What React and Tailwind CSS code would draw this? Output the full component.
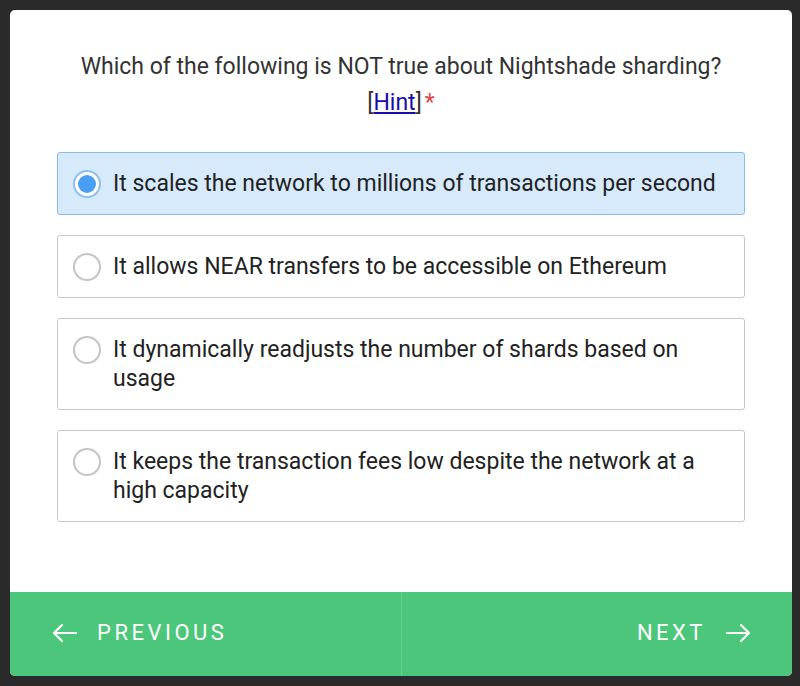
import React from "react";

const options = [
  "It scales the network to millions of transactions per second",
  "It allows NEAR transfers to be accessible on Ethereum",
  "It dynamically readjusts the number of shards based on usage",
  "It keeps the transaction fees low despite the network at a high capacity",
];

function Radio({ checked }) {
  if (checked) {
    return (
      <div className="w-[28px] h-[28px] rounded-full border-2 border-[#8ec0ee] bg-white flex items-center justify-center shrink-0">
        <div className="w-[18px] h-[18px] rounded-full bg-[#4a9ff5]" />
      </div>
    );
  }
  return <div className="w-[28px] h-[28px] rounded-full border-2 border-[#c4c4c4] bg-white shrink-0" />;
}

export default function App() {
  return (
    <div className="w-[800px] h-[686px] bg-[#2a2a2a] p-[10px] pr-[8px] pb-[10px]" style={{ fontFamily: "Roboto, 'Liberation Sans', sans-serif" }}>
      <div className="w-[782px] h-[666px] bg-white rounded-[5px] overflow-hidden flex flex-col">
        <div className="flex-1 flex flex-col items-center pt-[39px]">
          <div className="text-[23px] leading-[36px] text-[#333] text-center">
            Which of the following is NOT true about Nightshade sharding?
          </div>
          <div className="text-[23px] leading-[36px] text-[#333] text-center">
            [<span className="text-[#1a0dab] underline">Hint</span>]<span className="text-[#e04444] ml-[3px]">*</span>
          </div>
          <div className="w-[688px] flex flex-col gap-[20px] mt-[31px]">
            {options.map((t, i) => (
              <div
                key={i}
                className={
                  "flex items-start gap-[12px] pl-[15px] pr-[20px] py-[16px] rounded-[3px] border " +
                  (i === 0 ? "bg-[#d7eafc] border-[#86bde9]" : "bg-white border-[#c6c6c6]")
                }
              >
                <div className="pt-[1px]">
                  <Radio checked={i === 0} />
                </div>
                <div className="text-[23px] leading-[29px] text-[#222]">{t}</div>
              </div>
            ))}
          </div>
        </div>
        <div className="h-[84px] bg-[#4cc67a] flex">
          <div className="flex-1 flex items-center pl-[42px] gap-[19px] pb-[3px] border-r border-[#62d08c]">
            <svg width="26" height="20" viewBox="0 0 26 20" fill="none" stroke="white" strokeWidth="2.2" strokeLinecap="round" strokeLinejoin="round">
              <path d="M24 10H2M10 2L2 10l8 8" />
            </svg>
            <span className="text-white text-[22px] tracking-[3.5px]">PREVIOUS</span>
          </div>
          <div className="flex-1 flex items-center justify-end pr-[41px] gap-[19px] pb-[3px]">
            <span className="text-white text-[22px] tracking-[3.5px]">NEXT</span>
            <svg width="26" height="20" viewBox="0 0 26 20" fill="none" stroke="white" strokeWidth="2.2" strokeLinecap="round" strokeLinejoin="round">
              <path d="M2 10h22M16 2l8 8-8 8" />
            </svg>
          </div>
        </div>
      </div>
    </div>
  );
}
